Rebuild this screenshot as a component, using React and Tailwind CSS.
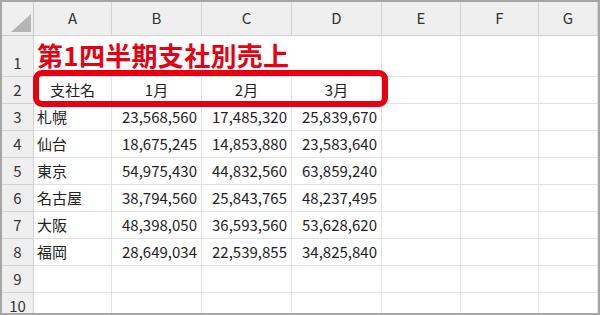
import React from 'react';

const cols = ['A', 'B', 'C', 'D', 'E', 'F', 'G'];
const colW = ['w-[78px]', 'w-[90px]', 'w-[90px]', 'w-[90px]', 'w-[79px]', 'w-[78px]', 'flex-1'];

const rows = [
  ['札幌', '23,568,560', '17,485,320', '25,839,670'],
  ['仙台', '18,675,245', '14,853,880', '23,583,640'],
  ['東京', '54,975,430', '44,832,560', '63,859,240'],
  ['名古屋', '38,794,560', '25,843,765', '48,237,495'],
  ['大阪', '48,398,050', '36,593,560', '53,628,620'],
  ['福岡', '28,649,034', '22,539,855', '34,825,840'],
  ['', '', '', ''],
  ['', '', '', ''],
];

const RowHead = ({ n, tall }) => (
  <div className={`w-[32px] shrink-0 bg-[#efefef] border-r border-b border-[#d2d2d2] flex justify-center ${tall ? 'items-end pb-[2px]' : 'items-center'} text-[15px] text-[#333]`}>
    {n}
  </div>
);

const App = () => {
  return (
    <div className="w-[600px] h-[315px] border-2 border-[#a6a6a6] bg-white overflow-hidden relative" style={{ fontFamily: '"Noto Sans CJK JP", "Noto Sans", sans-serif' }}>
      {/* column headers */}
      <div className="flex h-[34px]">
        <div className="w-[32px] shrink-0 bg-[#efefef] border-r border-b border-[#c8c8c8] flex items-end justify-end pr-[2px] pb-[3px]">
          <svg width="20" height="18" viewBox="0 0 20 18">
            <polygon points="20,0 20,18 0,18" fill="#b5b5b5" />
          </svg>
        </div>
        {cols.map((c, i) => (
          <div key={c} className={`${colW[i]} shrink-0 bg-[#efefef] border-r border-b border-[#d2d2d2] flex items-center justify-center text-[15px] text-[#333]`}>
            {c}
          </div>
        ))}
      </div>

      {/* row 1: title */}
      <div className="flex h-[41px]">
        <RowHead n={1} tall />
        {cols.map((c, i) => (
          <div key={c} className={`${colW[i]} shrink-0 border-b border-[#e2e2e2] ${i >= 3 ? 'border-r' : ''} relative`}>
            {i === 0 && (
              <span className="absolute left-[3px] bottom-[8px] whitespace-nowrap text-[26px] font-bold leading-none text-[#e60012] tracking-[0.3px]">
                第1四半期支社別売上
              </span>
            )}
          </div>
        ))}
      </div>

      {/* row 2: headings */}
      <div className="flex h-[27px]">
        <RowHead n={2} />
        {['支社名', '1月', '2月', '3月', '', '', ''].map((t, i) => (
          <div key={i} className={`${colW[i]} shrink-0 border-r border-b border-[#e2e2e2] flex items-center justify-center text-[15px] text-[#222]`}>
            {t}
          </div>
        ))}
      </div>

      {rows.map((r, ri) => (
        <div key={ri} className="flex h-[27px]">
          <RowHead n={ri + 3} />
          {cols.map((c, i) => (
            <div
              key={c}
              className={`${colW[i]} shrink-0 border-r border-b border-[#e2e2e2] flex items-center text-[15px] text-[#222] ${i === 0 ? 'justify-start pl-[3px]' : 'justify-end pr-[4px]'}`}
            >
              {r[i] || ''}
            </div>
          ))}
        </div>
      ))}

      {/* highlight box around the heading row */}
      <div className="absolute left-[31px] top-[68px] w-[355px] h-[37px] border-[6px] border-[#e60012] rounded-[9px]" />
    </div>
  );
};

export default App;
